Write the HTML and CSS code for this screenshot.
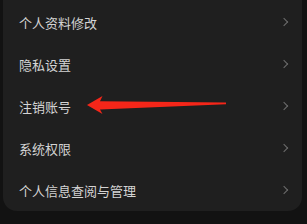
FILE: index.html
```html
<!DOCTYPE html>
<html lang="zh-CN">

<head>
    <meta charset="UTF-8">
    <title>设置</title>
    <link rel="stylesheet" href="styles.css">
</head>

<body>
    <div class="card">
        <div class="row"><span class="label">个人资料修改</span><span class="chevron"></span></div>
        <div class="row"><span class="label">隐私设置</span><span class="chevron"></span></div>
        <div class="row"><span class="label">注销账号</span><span class="chevron"></span></div>
        <div class="row"><span class="label">系统权限</span><span class="chevron"></span></div>
        <div class="row"><span class="label">个人信息查阅与管理</span><span class="chevron"></span></div>
    </div>
    <svg class="arrow" width="307" height="224" viewBox="0 0 307 224">
        <polygon points="87,105 102.5,96 100,101.2 226,102.4 226,104.2 100,109.6 102.5,114" fill="#f52619" />
    </svg>
</body>

</html>
```

FILE: styles.css
```css
body {
    margin: 0;
    height: 224px;
    overflow: hidden;
    background-color: #121212;
    font-family: "Noto Sans CJK SC", "Noto Sans", sans-serif;
    position: relative;
}

.card {
    margin: -14px 5px 0 3px;
    padding-top: 15px;
    background-color: #1f1f1f;
    border-radius: 14px;
}

.row {
    height: 42px;
    display: flex;
    align-items: center;
    justify-content: space-between;
    padding: 0 15px 0 16px;
}

.label {
    font-size: 13px;
    color: #d4d4d4;
}

.chevron {
    width: 5px;
    height: 5px;
    border-top: 1.3px solid #6e6e6e;
    border-right: 1.3px solid #6e6e6e;
    transform: rotate(45deg);
}

.arrow {
    position: absolute;
    left: 0;
    top: 0;
}
```
